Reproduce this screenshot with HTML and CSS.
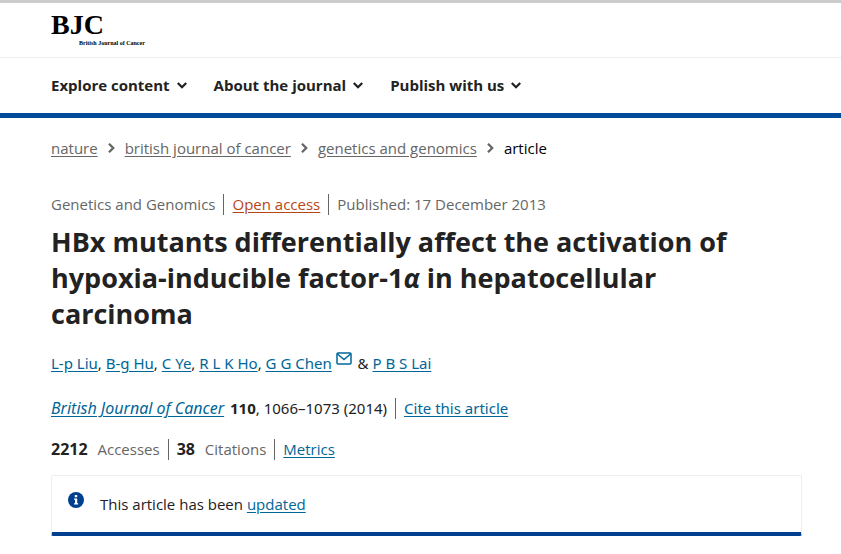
FILE: index.html
```html
<!DOCTYPE html>
<html lang="en">
<head>
<meta charset="utf-8">
<meta name="viewport" content="width=device-width, initial-scale=1">
<title>HBx mutants differentially affect the activation of hypoxia-inducible factor-1α</title>
<link rel="stylesheet" href="styles.css">
</head>
<body>
<header class="header">
  <div class="brand">
    <a class="logo" href="#"><span class="logo-mark">BJC</span><span class="logo-name">British Journal of Cancer</span></a>
  </div>
  <nav class="menu" aria-label="Journal">
    <button class="menu-item" type="button">Explore content <svg class="chevron" viewBox="0 0 10 7" aria-hidden="true"><path d="M.8 1 5 5.2 9.2 1"/></svg></button>
    <button class="menu-item" type="button">About the journal <svg class="chevron" viewBox="0 0 10 7" aria-hidden="true"><path d="M.8 1 5 5.2 9.2 1"/></svg></button>
    <button class="menu-item" type="button">Publish with us <svg class="chevron" viewBox="0 0 10 7" aria-hidden="true"><path d="M.8 1 5 5.2 9.2 1"/></svg></button>
  </nav>
</header>
<main class="page">
  <nav class="crumbs" aria-label="Breadcrumb">
    <a href="#">nature</a>
    <svg class="arrow" viewBox="0 0 7 10" aria-hidden="true"><path d="M1 .8 5.2 5 1 9.2"/></svg>
    <a href="#">british journal of cancer</a>
    <svg class="arrow" viewBox="0 0 7 10" aria-hidden="true"><path d="M1 .8 5.2 5 1 9.2"/></svg>
    <a href="#">genetics and genomics</a>
    <svg class="arrow" viewBox="0 0 7 10" aria-hidden="true"><path d="M1 .8 5.2 5 1 9.2"/></svg>
    <span class="current">article</span>
  </nav>
  <article>
    <ul class="facts muted">
      <li>Genetics and Genomics</li>
      <li><a class="open" href="#">Open access</a></li>
      <li>Published: <time datetime="2013-12-17">17 December 2013</time></li>
    </ul>
    <h1 class="title">HBx mutants differentially affect the activation of hypoxia-inducible factor-1<i>α</i> in hepatocellular carcinoma</h1>
    <p class="authors"><a href="#">L-p Liu</a>, <a href="#">B-g Hu</a>, <a href="#">C Ye</a>, <a href="#">R L K Ho</a>, <a href="#">G G Chen<svg class="mail" viewBox="0 0 16 13" aria-hidden="true"><rect x="1" y="1" width="14" height="11" rx="1"/><path d="M1.5 2 8 7.6 14.5 2"/></svg></a> &amp; <a href="#">P B S Lai</a></p>
    <ul class="facts source">
      <li><a href="#"><i>British Journal of Cancer</i></a> <b class="volume">110</b>, 1066–1073 (2014)</li>
      <li><a href="#">Cite this article</a></li>
    </ul>
    <ul class="facts metrics">
      <li><b>2212</b> <span class="label">Accesses</span></li>
      <li><b>38</b> <span class="label">Citations</span></li>
      <li><a href="#">Metrics</a></li>
    </ul>
    <div class="notice">
      <svg class="info" viewBox="0 0 16 16" aria-hidden="true"><circle cx="8" cy="8" r="8"/><path d="M6.8 3h2.4v2.2H6.8zM6 6.4h3.2v4.8h1V12.6H6v-1.4h1V7.8H6z"/></svg>
      <p>This article has been <a href="#">updated</a></p>
    </div>
  </article>
</main>
</body>
</html>
```

FILE: styles.css
```css
* {
  box-sizing: border-box;
}

body {
  margin: 0;
  border-top: 3px solid #ccc;
  background: #fff;
  color: #222;
  font-family: "Open Sans", "Noto Sans", sans-serif;
  font-size: 15px;
  line-height: 24px;
}

a {
  color: #069;
  text-underline-offset: 2px;
}

p,
ul {
  margin: 0;
  padding: 0;
}

.header {
  border-bottom: 5px solid #004b99;
}

.brand {
  padding: 8px 51px 10px;
  border-bottom: 1px solid #eee;
}

.logo {
  display: flex;
  flex-direction: column;
  align-items: flex-start;
  width: max-content;
  color: #000;
  font-family: "Liberation Serif", serif;
  font-weight: 700;
  text-decoration: none;
}

.logo-mark {
  font-size: 28px;
  line-height: 28px;
}

.logo-name {
  padding-left: 28px;
  font-size: 6px;
  line-height: 8px;
}

.menu {
  display: flex;
  gap: 27px;
  padding: 15px 51px 16px;
}

.menu-item {
  display: flex;
  align-items: center;
  gap: 7px;
  padding: 0;
  border: 0;
  background: none;
  color: #222;
  font: inherit;
  font-weight: 700;
}

.chevron {
  width: 10px;
  height: 7px;
}

.chevron path,
.arrow path {
  fill: none;
  stroke: currentColor;
  stroke-width: 2.3;
}

.page {
  padding: 18px 39px 18px 51px;
}

.crumbs {
  display: flex;
  align-items: center;
  gap: 10px;
  margin-bottom: 34px;
  color: #666;
}

.crumbs a {
  color: inherit;
}

.current {
  color: #000;
}

.arrow {
  width: 7px;
  height: 10px;
}

.facts {
  display: flex;
  align-items: center;
  list-style: none;
}

.facts li {
  line-height: 21px;
}

.facts li + li {
  margin-left: 8px;
  padding-left: 8px;
  border-left: 1px solid #666;
}

.muted,
.label {
  color: #666;
}

.open {
  color: #b74616;
}

.title {
  margin: 9px 0 19px;
  font-size: 27px;
  font-weight: 700;
  line-height: 36px;
}

.authors,
.source {
  font-family: "Noto Sans", "Open Sans", sans-serif;
}

.authors {
  margin-bottom: 23px;
}

.mail {
  width: 16px;
  height: 13px;
  margin: 0 2px 0 4px;
  vertical-align: 4px;
}

.mail rect,
.mail path {
  fill: none;
  stroke: currentColor;
  stroke-width: 1.5;
}

.source {
  margin-bottom: 20px;
}

.source i,
.metrics b {
  font-size: 16px;
}

.volume {
  margin-left: 2px;
}

.label {
  margin-left: 6px;
}

.notice {
  display: flex;
  gap: 16px;
  margin-top: 15px;
  padding: 16px;
  border: 1px solid #eee;
  border-bottom: 4px solid #00408f;
  border-radius: 2px;
}

.info {
  width: 16px;
  height: 16px;
}

.info circle {
  fill: #00408f;
}

.info path {
  fill: #fff;
}
```
